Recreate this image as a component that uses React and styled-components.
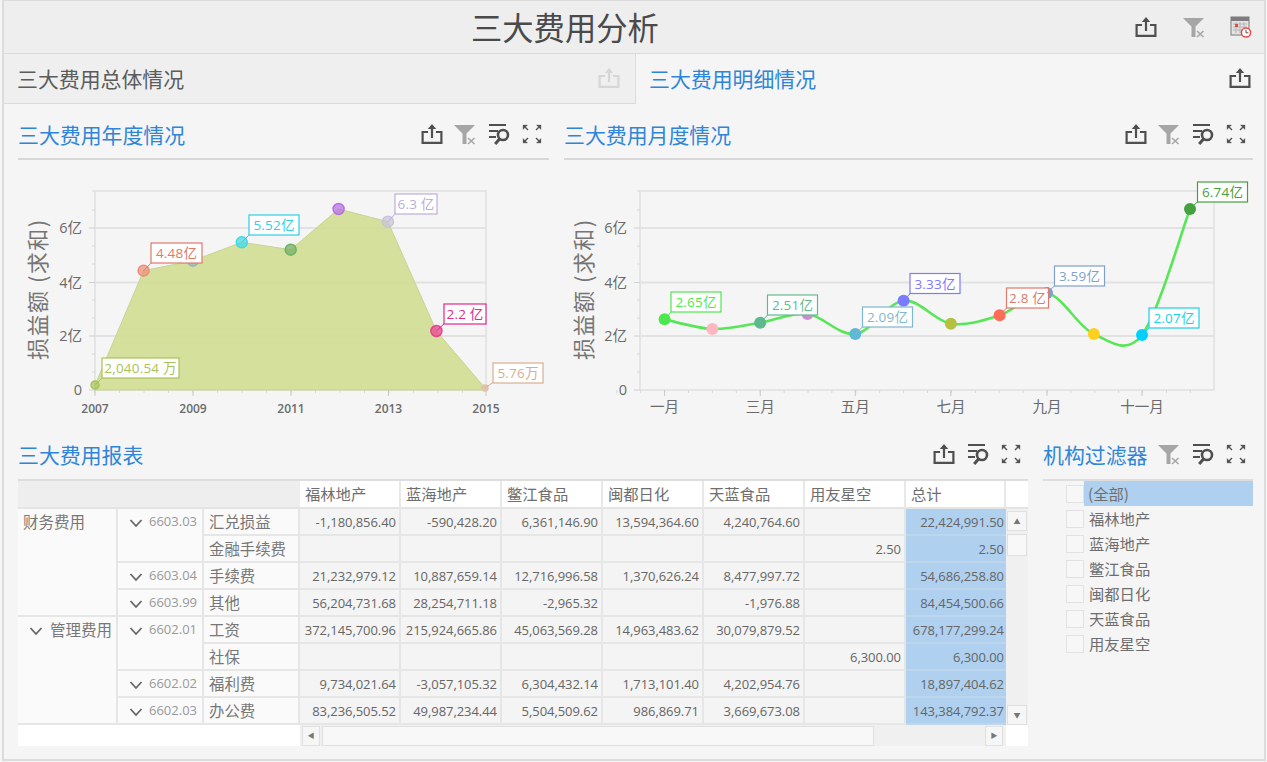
import React from "react";
import styled, { createGlobalStyle } from "styled-components";

const FONT = `"Open Sans", "Noto Sans CJK SC", sans-serif`;

const Global = createGlobalStyle`
  html, body { margin: 0; padding: 0; background: #f5f5f5; }
  body { font-family: ${FONT}; overflow: hidden; }
  * { box-sizing: border-box; }
`;

const Frame = styled.div`
  width: 1264px; height: 761px; margin-left: 2px;
  border: 2px solid #dcdcdc; border-top-width: 1px;
  background: #f5f5f5; display: flex; flex-direction: column; overflow: hidden;
`;
const TopBar = styled.header`
  height: 53px; flex: none; background: #eeeeee; border-bottom: 1px solid #dcdcdc;
  display: flex; align-items: center; position: relative; padding-right: 12px; justify-content: flex-end;
`;
const Title = styled.h1`
  position: absolute; left: 467px; top: 6px; margin: 0;
  font: 400 31.3px/40px "Noto Sans CJK SC", sans-serif; color: #4a4a4a;
`;
const IconRow = styled.div`
  display: flex; align-items: center; gap: ${p => p.$gap ?? 11.5}px;
`;
const IconBox = styled.svg`
  width: 22px; height: 22px; flex: none; display: block; overflow: visible;
`;
const Tabs = styled.div`
  height: 50px; flex: none; display: flex;
`;
const Tab = styled.div`
  width: ${p => p.$w}px; display: flex; align-items: center; justify-content: space-between;
  padding: 0 ${p => p.$pr}px 2px ${p => p.$pl}px;
  background: ${p => p.$active ? "#f5f5f5" : "#efefef"};
  border-bottom: ${p => p.$active ? "none" : "1px solid #dcdcdc"};
  border-right: ${p => p.$active ? "none" : "1px solid #dcdcdc"};
  font: 400 20.9px/28px "Noto Sans CJK SC", sans-serif;
  color: ${p => p.$active ? "#2f86d8" : "#5c5c5c"};
`;
const Body = styled.div`
  flex: 1; padding: 9px 0 0 14px; display: flex; flex-direction: column;
`;
const Row = styled.div`
  display: flex; gap: 15px;
`;
const Panel = styled.section`
  width: ${p => p.$w}px; flex: none;
`;
const PanelHead = styled.div`
  height: ${p => p.$h ?? 47}px; display: flex; align-items: center; justify-content: space-between;
  border-bottom: ${p => p.$line ? "2px solid #d8d8d8" : "none"};
  padding-bottom: ${p => p.$line ? 4 : 1}px; padding-right: 6px;
`;
const PanelTitle = styled.h2`
  margin: 0; font: 400 20.9px/28px "Noto Sans CJK SC", sans-serif; color: #2f86d8;
`;
const ChartSvg = styled.svg`
  display: block;
`;
const AxisText = styled.text`
  font: ${p => p.$bold ? "600 12px" : "400 14.5px"} ${FONT}; fill: #6b6b6b;
`;
const AxisTitle = styled.text`
  font: 400 22px "Noto Sans CJK SC", sans-serif; fill: #757575; letter-spacing: 1.5px;
`;
const TipText = styled.text`
  font: 400 13.5px ${FONT}; letter-spacing: 0.2px;
`;

const Icon = {
  Share: ({ c = "#4f4f4f" }) => (
    <IconBox viewBox="0 0 22 22">
      <path d="M7 9H1.6v10.8h18.8V9H15" fill="none" stroke={c} strokeWidth="2.2" />
      <path d="M11 15V4" stroke={c} strokeWidth="2.2" />
      <path d="M6.8 6 11 1l4.2 5z" fill={c} />
    </IconBox>
  ),
  Filter: () => (
    <IconBox viewBox="0 0 22 22">
      <path d="M0 2h21l-8.5 8.5V21H8.5V10.5z" fill="#a6a6a6" />
      <path d="M14 15l6.5 6M20.5 15l-6.5 6" stroke="#a6a6a6" strokeWidth="1.6" />
    </IconBox>
  ),
  Search: () => (
    <IconBox viewBox="0 0 22 22">
      <path d="M1 2h17M1 8h9M1 14h7" stroke="#4f4f4f" strokeWidth="2.2" fill="none" />
      <circle cx="15" cy="12" r="5" fill="none" stroke="#4f4f4f" strokeWidth="2.6" />
      <path d="M11.5 16l-4.3 5" stroke="#4f4f4f" strokeWidth="3" />
    </IconBox>
  ),
  Expand: () => (
    <IconBox viewBox="0 0 22 22">
      <g fill="#555" stroke="#555">
        <path d="M2 2h4.6L2 6.6z" strokeWidth=".3" /><path d="M3 3l4 4" strokeWidth="1.4" />
        <path d="M20 2h-4.6L20 6.6z" strokeWidth=".3" /><path d="M19 3l-4 4" strokeWidth="1.4" />
        <path d="M2 20h4.6L2 15.4z" strokeWidth=".3" /><path d="M3 19l4-4" strokeWidth="1.4" />
        <path d="M20 20h-4.6l4.6-4.6z" strokeWidth=".3" /><path d="M19 19l-4-4" strokeWidth="1.4" />
      </g>
    </IconBox>
  ),
  Calendar: () => (
    <IconBox viewBox="0 0 22 22">
      <rect x="1" y="1" width="18" height="18" fill="#e4e4e4" stroke="#8d8d8d" strokeWidth="1.2" />
      <rect x="1" y="1" width="18" height="4" fill="#7d7d7d" />
      <path d="M3 8h14M3 11h14M3 14h14M6 6v11M10 6v11M14 6v11" stroke="#b5b5b5" strokeWidth="1" />
      <rect x="5" y="8" width="3" height="3" fill="#e84a4a" />
      <circle cx="16" cy="16.5" r="4.6" fill="#fff" stroke="#e84a4a" strokeWidth="1.5" />
      <path d="M16 14v2.8h2.4" fill="none" stroke="#555" strokeWidth="1" />
    </IconBox>
  ),
};

function smooth(pts) {
  let d = `M${pts[0][0]} ${pts[0][1]}`;
  for (let i = 0; i < pts.length - 1; i++) {
    const p0 = pts[i - 1] || pts[i], p1 = pts[i], p2 = pts[i + 1], p3 = pts[i + 2] || p2;
    const c1x = p1[0] + (p2[0] - p0[0]) / 6, c1y = p1[1] + (p2[1] - p0[1]) / 6;
    const c2x = p2[0] - (p3[0] - p1[0]) / 6, c2y = p2[1] - (p3[1] - p1[1]) / 6;
    d += ` C${c1x.toFixed(1)} ${c1y.toFixed(1)} ${c2x.toFixed(1)} ${c2y.toFixed(1)} ${p2[0]} ${p2[1]}`;
  }
  return d;
}

function Tip({ t, x, y, w, c, from }) {
  return (
    <g>
      <line x1={from[0]} y1={from[1]} x2={x + 2} y2={y + 18} stroke={c} strokeWidth="1" />
      <rect x={x} y={y} width={w} height={20} fill="#fff" stroke={c} strokeWidth="1.2" />
      <TipText x={x + w / 2} y={y + 15} textAnchor="middle" fill={c}>{t}</TipText>
    </g>
  );
}

function Axes({ left, right, majors, xLabels, bold }) {
  const ys = [228, 282.5, 336, 390];
  const labels = ["6亿", "4亿", "2亿", "0"];
  const minorY = [191, 210, 246, 264, 300, 318, 354, 372];
  const minors = [];
  const step = (majors[1] - majors[0]) / 4;
  for (let x = majors[0] - (bold ? 0 : step * 2); x <= right; x += step) minors.push(x);
  return (
    <g>
      <rect x={left} y="191" width={right - left} height="199" fill="none" stroke="#e0e0e0" strokeWidth="1.5" />
      {ys.slice(0, 3).map(y => <line key={y} x1={left} x2={right} y1={y} y2={y} stroke="#e2e2e2" strokeWidth="2" />)}
      {ys.map(y => <line key={y} x1={left - 6} x2={left} y1={y} y2={y} stroke="#d0d0d0" strokeWidth="1" />)}
      {minorY.map(y => <line key={y} x1={left - 3} x2={left} y1={y} y2={y} stroke="#d8d8d8" strokeWidth="1" />)}
      {minors.map(x => <line key={x} x1={x} x2={x} y1="390" y2="393" stroke="#d8d8d8" strokeWidth="1" />)}
      {majors.map(x => <line key={x} x1={x} x2={x} y1="390" y2="396" stroke="#c8c8c8" strokeWidth="1" />)}
      {ys.map((y, i) => <AxisText key={y} x={left - 13} y={y + 5} textAnchor="end">{labels[i]}</AxisText>)}
      {xLabels.map((l, i) => <AxisText key={l} $bold={bold} x={majors[i]} y={bold ? 413 : 412} textAnchor="middle">{l}</AxisText>)}
    </g>
  );
}

const yearPts = [[95, 385, "#a9c35a", 4], [143.6, 270.7, "#ef8f7a", 5.5], [192.9, 260.7, "#9fb0b8", 5.5], [241.8, 242.3, "#3fd9e6", 5.5], [290.7, 249.7, "#6fb060", 5.5], [338.6, 209, "#b96fe6", 5.5], [387.9, 221.7, "#c9c3d8", 5.5], [436.4, 331, "#ec3f8c", 5.5], [485, 388, "#e0c0a8", 3]];
const yearTips = [
  { t: "2,040.54 万", x: 102, y: 358, w: 77, c: "#a9c35a", from: [95, 385] },
  { t: "4.48亿", x: 151, y: 243, w: 51, c: "#e0786b", from: [143.6, 270.7] },
  { t: "5.52亿", x: 249, y: 215, w: 50, c: "#2ccfe6", from: [241.8, 242.3] },
  { t: "6.3 亿", x: 395, y: 194, w: 42, c: "#bcaed8", from: [387.9, 221.7] },
  { t: "2.2 亿", x: 444, y: 304, w: 42, c: "#e0288f", from: [436.4, 331] },
  { t: "5.76万", x: 493, y: 363, w: 50, c: "#d7ae92", from: [485, 388] },
];
const monthPts = [[664.6, 319.3, "#4de84d"], [712.4, 329, "#ffb6c1"], [760.2, 322.7, "#5fb98f"], [807.5, 314, "#c88fcf"], [855.3, 334, "#5fb8d6"], [903.6, 300.7, "#7b7bff"], [950.9, 323.7, "#b5c040"], [999.6, 315.3, "#ff6b55"], [1047, 293, "#7f9fd0"], [1093.8, 334, "#ffd020"], [1142, 335, "#00d0ff"], [1190, 209, "#45a040"]];
const monthTips = [
  { t: "2.65亿", x: 671, y: 292, w: 50, c: "#4de84d", from: [664.6, 319.3] },
  { t: "2.51亿", x: 767.5, y: 295, w: 50, c: "#5fb98f", from: [760.2, 322.7] },
  { t: "2.09亿", x: 862.5, y: 307, w: 50, c: "#7fb8cc", from: [855.3, 334] },
  { t: "3.33亿", x: 910, y: 273.5, w: 50, c: "#7b7bff", from: [903.6, 300.7] },
  { t: "2.8 亿", x: 1006.5, y: 288, w: 42, c: "#e0786b", from: [999.6, 315.3] },
  { t: "3.59亿", x: 1054.5, y: 266, w: 50, c: "#7f9fd0", from: [1047, 293] },
  { t: "2.07亿", x: 1149, y: 308, w: 50, c: "#1ccfe8", from: [1142, 335] },
  { t: "6.74亿", x: 1197.5, y: 182, w: 50, c: "#45a040", from: [1190, 209] },
];

function YearChart() {
  const area = `M95 390 L${yearPts.map(p => `${p[0]} ${p[1]}`).join(" L")} L485 390 Z`;
  return (
    <ChartSvg width="531" height="270" viewBox="18 160 531 270">
      <Axes left={95} right={486} majors={[95, 193, 291, 388.5, 486]} xLabels={["2007", "2009", "2011", "2013", "2015"]} bold />
      <path d={area} fill="#cfdc8c" fillOpacity="0.85" stroke="#c6d594" strokeWidth="1" />
      {yearPts.map((p, i) => <circle key={i} cx={p[0]} cy={p[1]} r={p[3]} fill={p[2]} stroke={p[2]} fillOpacity=".72" strokeWidth="1.5" />)}
      {yearTips.map(t => <Tip key={t.t} {...t} />)}
      <AxisTitle transform="translate(46 360) rotate(-90)">损益额 (求和)</AxisTitle>
    </ChartSvg>
  );
}

function MonthChart() {
  return (
    <ChartSvg width="689" height="270" viewBox="564 160 689 270">
      <Axes left={640} right={1214} majors={[664.6, 760.2, 855.3, 950.9, 1047, 1142]} xLabels={["一月", "三月", "五月", "七月", "九月", "十一月"]} />
      <path d={smooth(monthPts)} fill="none" stroke="#58e658" strokeWidth="2.6" />
      {monthPts.map((p, i) => <circle key={i} cx={p[0]} cy={p[1]} r="6" fill={p[2]} />)}
      {monthTips.map(t => <Tip key={t.t} {...t} />)}
      <AxisTitle transform="translate(592 360) rotate(-90)">损益额 (求和)</AxisTitle>
    </ChartSvg>
  );
}

const Grid = styled.div`
  display: grid; width: 1010px;
  grid-template-columns: 100px 86px 96px 101px 101px 101px 101px 101px 101px 100px 22px;
  grid-template-rows: 28px repeat(8, 27px) 21px;
  border-top: 2px solid #dedede;
`;
const Corner = styled.div`
  grid-column: span 3; background: #eeeeee; border-bottom: 2px solid #e4e4e4;
`;
const HeadCell = styled.div`
  background: #fff; border-right: 2px solid #e8e8e8; border-bottom: 2px solid #e4e4e4;
  font: 400 15.3px/24px "Noto Sans CJK SC", sans-serif; color: #6e6e6e; padding-left: 5px; white-space: nowrap;
`;
const HeadEnd = styled.div`
  background: #fff; border-bottom: 2px solid #e4e4e4;
`;
const GroupCell = styled.div`
  grid-row: span ${p => p.$span}; background: #fafafa; border-right: 2px solid #e6e6e6; border-bottom: 2px solid #e6e6e6;
  display: flex; align-items: flex-start; padding: 0 0 0 ${p => p.$pl}px; gap: ${p => p.$gap ?? 0}px;
  font: 400 15.5px/25px "Noto Sans CJK SC", sans-serif; color: #777; white-space: nowrap;
`;
const Code = styled.span`
  font: 400 13px/25px ${FONT}; color: #999;
`;
const Chevron = styled.svg`
  width: 14px; height: 10px; margin-top: 9px; flex: none;
`;
const LeafCell = styled.div`
  background: #fafafa; border-right: 2px solid #e6e6e6; border-bottom: 2px solid #e6e6e6;
  font: 400 15.4px/25px "Noto Sans CJK SC", sans-serif; color: #777; padding-left: 5px; white-space: nowrap;
`;
const Val = styled.div`
  background: ${p => p.$total ? "#afd0ee" : "#f4f4f4"};
  border-right: ${p => p.$total ? "none" : "2px solid #e6e6e6"};
  border-bottom: 2px solid ${p => p.$total ? "#bed6ec" : "#e6e6e6"};
  font: 400 13px/26px ${FONT}; color: #666; text-align: right; padding-right: ${p => p.$total ? 2 : 3}px;
  letter-spacing: -0.05px; white-space: nowrap; overflow: hidden;
`;
const VScroll = styled.div`
  grid-row: span 8; background: #f0f0f0; display: flex; flex-direction: column; padding: 2px 0 0 1px;
`;
const ScrollBtn = styled.div`
  width: ${p => p.$w ?? 20}px; height: ${p => p.$h ?? 20}px; flex: none; background: #f6f6f6; border: 1px solid #e0e0e0;
  display: flex; align-items: center; justify-content: center; color: #777; font-size: 7px; line-height: 1;
`;
const Thumb = styled.div`
  width: 20px; height: 22px; margin-top: 3px; background: #f8f8f8; border: 1px solid #e0e0e0; flex: none;
`;
const Spacer = styled.div` flex: 1; `;
const WhiteBlank = styled.div`
  grid-column: span ${p => p.$span}; background: #fff;
`;
const HScroll = styled.div`
  grid-column: span 7; background: #f0f0f0; display: flex; align-items: center; padding: 0 3px 0 2px; gap: 2px;
`;
const HThumb = styled.div`
  width: 552px; height: 20px; background: #f8f8f8; border: 1px solid #e0e0e0; flex: none;
`;

const FilterList = styled.div`
  border-top: 2px solid #dedede;
`;
const FilterItem = styled.div`
  height: 25px; display: flex; align-items: center; padding-left: 23px;
`;
const Check = styled.span`
  width: 18px; height: 18px; flex: none; border: 1.5px solid #e2e2e2; background: #f7f7f7;
`;
const FilterLabel = styled.span`
  flex: 1; height: 25px; padding-left: ${p => p.$sel ? 4 : 5}px; background: ${p => p.$sel ? "#afd0ee" : "transparent"};
  font: 400 15.3px/25px "Noto Sans CJK SC", sans-serif; color: #6e6e6e;
`;

const chev = (
  <Chevron viewBox="0 0 14 10"><path d="M1.5 2 7 8l5.5-6" fill="none" stroke="#666" strokeWidth="1.8" /></Chevron>
);

const companies = ["福林地产", "蓝海地产", "鳖江食品", "闽都日化", "天蓝食品", "用友星空", "总计"];

const rows = [
  { group: "财务费用", groupSpan: 4, code: "6603.03", codeSpan: 2, leaf: "汇兑损益", v: ["-1,180,856.40", "-590,428.20", "6,361,146.90", "13,594,364.60", "4,240,764.60", "", "22,424,991.50"], scroll: true },
  { leaf: "金融手续费", v: ["", "", "", "", "", "2.50", "2.50"] },
  { code: "6603.04", codeSpan: 1, leaf: "手续费", v: ["21,232,979.12", "10,887,659.14", "12,716,996.58", "1,370,626.24", "8,477,997.72", "", "54,686,258.80"] },
  { code: "6603.99", codeSpan: 1, leaf: "其他", v: ["56,204,731.68", "28,254,711.18", "-2,965.32", "", "-1,976.88", "", "84,454,500.66"] },
  { group: "管理费用", groupSpan: 4, chevron: true, code: "6602.01", codeSpan: 2, leaf: "工资", v: ["372,145,700.96", "215,924,665.86", "45,063,569.28", "14,963,483.62", "30,079,879.52", "", "678,177,299.24"] },
  { leaf: "社保", v: ["", "", "", "", "", "6,300.00", "6,300.00"] },
  { code: "6602.02", codeSpan: 1, leaf: "福利费", v: ["9,734,021.64", "-3,057,105.32", "6,304,432.14", "1,713,101.40", "4,202,954.76", "", "18,897,404.62"] },
  { code: "6602.03", codeSpan: 1, leaf: "办公费", v: ["83,236,505.52", "49,987,234.44", "5,504,509.62", "986,869.71", "3,669,673.08", "", "143,384,792.37"] },
];

function ReportTable() {
  return (
    <Grid>
      <Corner />
      {companies.map(c => <HeadCell key={c}>{c}</HeadCell>)}
      <HeadEnd />
      {rows.map((r, i) => (
        <React.Fragment key={i}>
          {r.group && (
            <GroupCell $span={r.groupSpan} $pl={r.chevron ? 11 : 5} $gap={r.chevron ? 7 : 0}>
              {r.chevron && chev}{r.group}
            </GroupCell>
          )}
          {r.code && (
            <GroupCell $span={r.codeSpan} $pl={11} $gap={6}>{chev}<Code>{r.code}</Code></GroupCell>
          )}
          <LeafCell>{r.leaf}</LeafCell>
          {r.v.map((v, j) => <Val key={j} $total={j === 6}>{v}</Val>)}
          {r.scroll && (
            <VScroll>
              <ScrollBtn>▲</ScrollBtn>
              <Thumb />
              <Spacer />
              <ScrollBtn>▼</ScrollBtn>
            </VScroll>
          )}
        </React.Fragment>
      ))}
      <WhiteBlank $span={3} />
      <HScroll>
        <ScrollBtn $w={18}>◀</ScrollBtn>
        <HThumb />
        <Spacer />
        <ScrollBtn $w={18}>▶</ScrollBtn>
      </HScroll>
      <WhiteBlank $span={1} />
    </Grid>
  );
}

const filters = ["(全部)", "福林地产", "蓝海地产", "鳖江食品", "闽都日化", "天蓝食品", "用友星空"];

export default function App() {
  return (
    <>
      <Global />
      <Frame>
        <TopBar>
          <Title>三大费用分析</Title>
          <IconRow $gap={25.5}><Icon.Share /><Icon.Filter /><Icon.Calendar /></IconRow>
        </TopBar>
        <Tabs>
          <Tab $w={632} $pl={13} $pr={15}>三大费用总体情况<Icon.Share c="#d6d6d6" /></Tab>
          <Tab $active $w={628} $pl={13} $pr={13}>三大费用明细情况<Icon.Share /></Tab>
        </Tabs>
        <Body>
          <Row>
            <Panel $w={531}>
              <PanelHead $line>
                <PanelTitle>三大费用年度情况</PanelTitle>
                <IconRow><Icon.Share /><Icon.Filter /><Icon.Search /><Icon.Expand /></IconRow>
              </PanelHead>
              <YearChart />
            </Panel>
            <Panel $w={689}>
              <PanelHead $line>
                <PanelTitle>三大费用月度情况</PanelTitle>
                <IconRow><Icon.Share /><Icon.Filter /><Icon.Search /><Icon.Expand /></IconRow>
              </PanelHead>
              <MonthChart />
            </Panel>
          </Row>
          <Row>
            <Panel $w={1010}>
              <PanelHead $h={49}>
                <PanelTitle>三大费用报表</PanelTitle>
                <IconRow><Icon.Share /><Icon.Search /><Icon.Expand /></IconRow>
              </PanelHead>
              <ReportTable />
            </Panel>
            <Panel $w={210}>
              <PanelHead $h={49}>
                <PanelTitle>机构过滤器</PanelTitle>
                <IconRow><Icon.Filter /><Icon.Search /><Icon.Expand /></IconRow>
              </PanelHead>
              <FilterList>
                {filters.map((f, i) => (
                  <FilterItem key={f}>
                    <Check />
                    <FilterLabel $sel={i === 0}>{f}</FilterLabel>
                  </FilterItem>
                ))}
              </FilterList>
            </Panel>
          </Row>
        </Body>
      </Frame>
    </>
  );
}
